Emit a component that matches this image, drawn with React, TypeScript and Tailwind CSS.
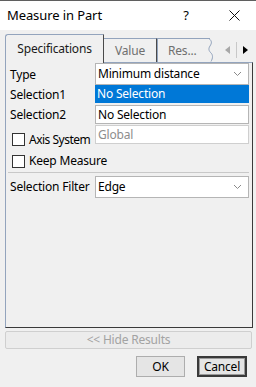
import React from "react";

const Chevron = () => (
  <svg width="9" height="6" viewBox="0 0 9 6" className="shrink-0">
    <path d="M1 1 L4.5 4.5 L8 1" fill="none" stroke="#8a8a8a" strokeWidth="1" />
  </svg>
);

const Check = () => (
  <div className="w-[13px] h-[13px] border border-[#333] bg-white shrink-0" />
);

export default function App() {
  return (
    <div
      className="w-[256px] h-[387px] bg-[#f0f0f0] flex flex-col text-[12px] tracking-[-0.2px] text-black overflow-hidden"
      style={{ fontFamily: '"Noto Sans", "Open Sans", sans-serif' }}
    >
      <div className="h-px bg-[#5f5f5f]" />
      {/* Title bar */}
      <div className="h-[29px] bg-white flex items-center pl-[7px] shrink-0">
        <span className="leading-none text-[13px] tracking-[-0.1px]">Measure in Part</span>
        <span className="ml-auto w-[10px] text-center leading-none mr-[38px] text-[13px]">?</span>
        <svg width="11" height="11" viewBox="0 0 11 11" className="mr-[16px]">
          <path d="M0.5 0.5 L10.5 10.5 M10.5 0.5 L0.5 10.5" stroke="#111" strokeWidth="1" />
        </svg>
      </div>

      {/* Tabs */}
      <div className="mt-[4px] h-[28px] flex items-end pl-[5px] relative z-10 shrink-0">
        <div className="w-[99px] h-[29px] -mb-px bg-[#f0f0f0] border-l border-t border-[#93a4bd] border-r-[#4a4a4a] border-r rounded-tl-[3px] flex items-center justify-center text-[#1a1a1a]">
          <span className="leading-none">Specifications</span>
        </div>
        <div className="w-[53px] h-[24px] border-t border-r border-[#93a4bd] border-r-[#4a4a4a] flex items-center justify-center text-[#6f6f6f] mb-0">
          <span className="leading-none">Value</span>
        </div>
        <div className="w-[53px] h-[24px] border-t border-l border-[#93a4bd] flex items-center pl-[10px] text-[#6f6f6f] relative">
          <span className="leading-none">Res...</span>
          <svg width="6" height="24" viewBox="0 0 6 24" className="absolute right-[-4px] top-[-1px]">
            <path d="M1 0.5 C4 3, 4 5, 2 8 C0 11, 1 13, 3 15 C5 17, 5 20, 3 23.5" fill="none" stroke="#93a4bd" strokeWidth="1" />
          </svg>
        </div>
        <div className="ml-auto mr-[2px] mb-[4px] h-[16px] flex items-stretch">
          <div className="w-[18px] flex items-center justify-center border-r border-[#c8c8c8]">
            <svg width="5" height="8" viewBox="0 0 5 8">
              <path d="M5 0 L0 4 L5 8 Z" fill="#a8a8a8" />
            </svg>
          </div>
          <div className="w-[17px] flex items-center justify-center">
            <svg width="5" height="8" viewBox="0 0 5 8">
              <path d="M0 0 L5 4 L0 8 Z" fill="#000" />
            </svg>
          </div>
        </div>
      </div>

      {/* Panel */}
      <div className="mx-[3px] ml-[5px] h-[266px] border border-[#93a4bd] border-r-[#3a3a3a] border-b-[#3a3a3a] flex flex-col pr-[3px] shrink-0">
        <div className="h-[22px] flex items-center">
          <span className="w-[89px] pl-[4px] leading-none pt-[2px]">Type</span>
          <div className="flex-1 h-[22px] bg-white border border-[#b5b5b5] flex items-center pl-[2px] pr-[6px]">
            <span className="leading-none flex-1">Minimum distance</span>
            <Chevron />
          </div>
        </div>
        <div className="h-[20px] flex items-center">
          <span className="w-[89px] pl-[4px] leading-none">Selection1</span>
          <div className="flex-1 h-[18px] self-start mt-0 bg-[#0078d7] flex items-center pl-[2px] text-white">
            <span className="leading-none">No Selection</span>
          </div>
        </div>
        <div className="h-[20px] flex items-center">
          <span className="w-[89px] pl-[4px] leading-none">Selection2</span>
          <div className="flex-1 h-[19px] self-start bg-white border border-[#b5b5b5] flex items-center pl-[2px]">
            <span className="leading-none">No Selection</span>
          </div>
        </div>
        <div className="h-[20px] flex items-start">
          <div className="w-[89px] pl-[6px] flex items-center gap-[4px] mt-[8px] shrink-0">
            <Check />
            <span className="leading-none whitespace-nowrap tracking-[-0.5px]">Axis System</span>
          </div>
          <div className="flex-1 h-[19px] bg-white border border-[#cfcfcf] flex items-center pl-[2px] text-[#8d8d8d]">
            <span className="leading-none">Global</span>
          </div>
        </div>
        <div className="mt-[6px] h-[20px] flex items-center pl-[6px] gap-[4px]">
          <Check />
          <span className="leading-none">Keep Measure</span>
        </div>
        <div className="mt-[1px] ml-[2px] h-px bg-[#c8c8c8]" />
        <div className="mt-[3px] h-[22px] flex items-center">
          <span className="w-[89px] pl-[4px] leading-none whitespace-nowrap">Selection Filter</span>
          <div className="flex-1 h-[22px] bg-white border border-[#b5b5b5] flex items-center pl-[2px] pr-[6px]">
            <span className="leading-none flex-1">Edge</span>
            <Chevron />
          </div>
        </div>
      </div>

      {/* Hide results */}
      <div className="mt-[3px] ml-[5px] mr-[4px] h-[18px] border border-[#cfcfcf] bg-[#ececec] rounded-[2px] flex items-center justify-center text-[#a3a3a3] shrink-0">
        <span className="leading-none">&lt;&lt; Hide Results</span>
      </div>

      {/* Buttons */}
      <div className="mt-[7px] h-[21px] flex justify-end pr-[9px] gap-[12px] shrink-0">
        <div className="w-[49px] h-[21px] border border-[#adadad] bg-[#e5e5e5] flex items-center justify-center">
          <span className="leading-none">OK</span>
        </div>
        <div className="w-[50px] h-[21px] border-2 border-[#3a3a3a] bg-[#e5e5e5] flex items-center justify-center">
          <div className="w-full h-full border border-[#9a9a9a] flex items-center justify-center">
            <span className="leading-none">Cancel</span>
          </div>
        </div>
      </div>
    </div>
  );
}
